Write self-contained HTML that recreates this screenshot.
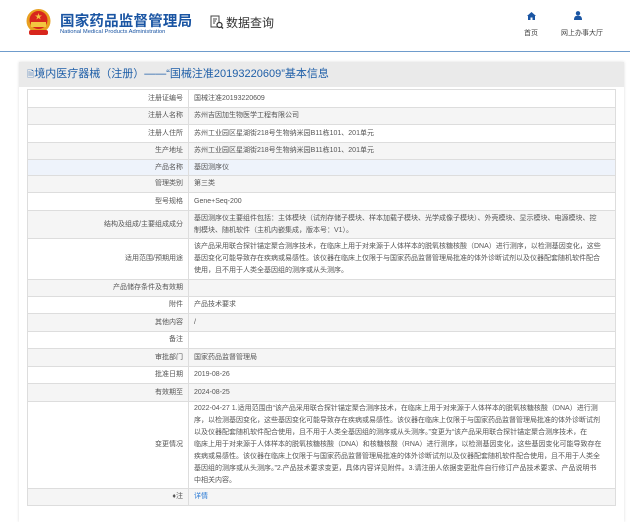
<!DOCTYPE html>
<html><head><meta charset="utf-8"><style>
*{margin:0;padding:0;box-sizing:border-box}
body{width:630px;height:509px;overflow:hidden;background:#fff;font-family:"Liberation Sans","Noto Sans CJK SC",sans-serif;position:relative}
.a{position:absolute}
.hr{left:0;top:51px;width:630px;height:1px;background:#6f9ccc}
.card{left:19px;top:62px;width:605px;height:460px;background:#fff;box-shadow:0 0 3px #ddd}
.tb{left:19px;top:62px;width:605px;height:25px;background:#eaeaea;font-size:11px;color:#1f5fa8;line-height:25px;padding-left:8px}
table{position:absolute;left:27px;top:89px;width:589px;border-collapse:collapse;font-size:7px;color:#555;table-layout:fixed}
td{border:1px solid #ddd;padding:0 5px;line-height:12px;vertical-align:middle;overflow:hidden}
td:first-child{width:161px;text-align:right}
tr:nth-child(even) td{background:#f5f5f5}
tr.h td{background:#eef3fb}
</style></head><body>
<svg class="a" style="left:25px;top:8px" width="27" height="28" viewBox="0 0 27 28"><circle cx="13.5" cy="13" r="12" fill="#e8a020"/><circle cx="13.5" cy="12" r="9" fill="#d8261c"/><rect x="6" y="14" width="15" height="5" fill="#f3c640"/><rect x="4" y="22" width="19" height="5" rx="2" fill="#d8261c"/><polygon points="13.5,5 14.3,7.5 17,7.5 14.8,9 15.6,11.5 13.5,10 11.4,11.5 12.2,9 10,7.5 12.7,7.5" fill="#f3c640"/></svg>
<div class="a" style="left:60px;top:10px;font-size:14.5px;font-weight:bold;color:#1a55a3;letter-spacing:0.2px;white-space:nowrap">国家药品监督管理局</div>
<div class="a" style="left:60px;top:29px;font-size:5.8px;color:#1a55a3;white-space:nowrap">National Medical Products Administration</div>
<svg class="a" style="left:210px;top:15px" width="14" height="15" viewBox="0 0 14 15"><rect x="1" y="1" width="8" height="11" fill="none" stroke="#444" stroke-width="1"/><path d="M3 4h4M3 6h3M3 8h2" stroke="#444"/><circle cx="9.5" cy="10" r="2.5" fill="#fff" stroke="#333" stroke-width="1.2"/><path d="M11.3 11.8L13 13.5" stroke="#333" stroke-width="1.4"/></svg>
<div class="a" style="left:226px;top:14px;font-size:12px;color:#333;white-space:nowrap">数据查询</div>
<svg class="a" style="left:527px;top:12px" width="9" height="8" viewBox="0 0 9 8"><path d="M4.5 0L9 4H8V8H5.5V5.5h-2V8H1V4H0Z" fill="#1a55a3"/></svg>
<div class="a" style="left:524px;top:28px;font-size:7px;color:#444">首页</div>
<svg class="a" style="left:574px;top:11px" width="8" height="9" viewBox="0 0 8 9"><circle cx="4" cy="2.3" r="2.2" fill="#1a55a3"/><path d="M0 9C0 5.5 1.5 4.8 4 4.8S8 5.5 8 9Z" fill="#1a55a3"/></svg>
<div class="a" style="left:561px;top:28px;font-size:7px;color:#444;white-space:nowrap">网上办事大厅</div>
<div class="a hr"></div>
<div class="a card"></div>
<div class="a tb"><span style="font-size:9px">🗎</span>境内医疗器械（注册）——“国械注准20193220609”基本信息</div>
<table>
<tr style="height:18px"><td>注册证编号</td><td>国械注准20193220609</td></tr>
<tr style="height:17px"><td>注册人名称</td><td>苏州吉因加生物医学工程有限公司</td></tr>
<tr style="height:18px"><td>注册人住所</td><td>苏州工业园区星湖街218号生物纳米园B11栋101、201单元</td></tr>
<tr style="height:17px"><td>生产地址</td><td>苏州工业园区星湖街218号生物纳米园B11栋101、201单元</td></tr>
<tr class="h" style="height:16px"><td>产品名称</td><td>基因测序仪</td></tr>
<tr style="height:17px"><td>管理类别</td><td>第三类</td></tr>
<tr style="height:18px"><td>型号规格</td><td>Gene+Seq-200</td></tr>
<tr style="height:28px"><td>结构及组成/主要组成成分</td><td>基因测序仪主要组件包括：主体模块（试剂存储子模块、样本加载子模块、光学成像子模块）、外壳模块、显示模块、电源模块、控<br>制模块、随机软件（主机内嵌集成，版本号：V1）。</td></tr>
<tr style="height:41px"><td>适用范围/预期用途</td><td>该产品采用联合探针锚定聚合测序技术，在临床上用于对来源于人体样本的脱氧核糖核酸（DNA）进行测序，以检测基因变化，这些<br>基因变化可能导致存在疾病或易感性。该仪器在临床上仅限于与国家药品监督管理局批准的体外诊断试剂以及仪器配套随机软件配合<br>使用，且不用于人类全基因组的测序或从头测序。</td></tr>
<tr style="height:17px"><td>产品储存条件及有效期</td><td></td></tr>
<tr style="height:17px"><td>附件</td><td>产品技术要求</td></tr>
<tr style="height:18px"><td>其他内容</td><td>/</td></tr>
<tr style="height:17px"><td>备注</td><td></td></tr>
<tr style="height:18px"><td>审批部门</td><td>国家药品监督管理局</td></tr>
<tr style="height:17px"><td>批准日期</td><td>2019-08-26</td></tr>
<tr style="height:18px"><td>有效期至</td><td>2024-08-25</td></tr>
<tr style="height:87px"><td>变更情况</td><td>2022-04-27 1.适用范围由“该产品采用联合探针锚定聚合测序技术，在临床上用于对来源于人体样本的脱氧核糖核酸（DNA）进行测<br>序，以检测基因变化，这些基因变化可能导致存在疾病或易感性。该仪器在临床上仅限于与国家药品监督管理局批准的体外诊断试剂<br>以及仪器配套随机软件配合使用，且不用于人类全基因组的测序或从头测序。”变更为“该产品采用联合探针锚定聚合测序技术，在<br>临床上用于对来源于人体样本的脱氧核糖核酸（DNA）和核糖核酸（RNA）进行测序，以检测基因变化，这些基因变化可能导致存在<br>疾病或易感性。该仪器在临床上仅限于与国家药品监督管理局批准的体外诊断试剂以及仪器配套随机软件配合使用，且不用于人类全<br>基因组的测序或从头测序。”2.产品技术要求变更，具体内容详见附件。3.请注册人依据变更批件自行修订产品技术要求、产品说明书<br>中相关内容。</td></tr>
<tr style="height:17px"><td>♦注</td><td style="color:#2a7ad5">详情</td></tr>
</table>
</body></html>
